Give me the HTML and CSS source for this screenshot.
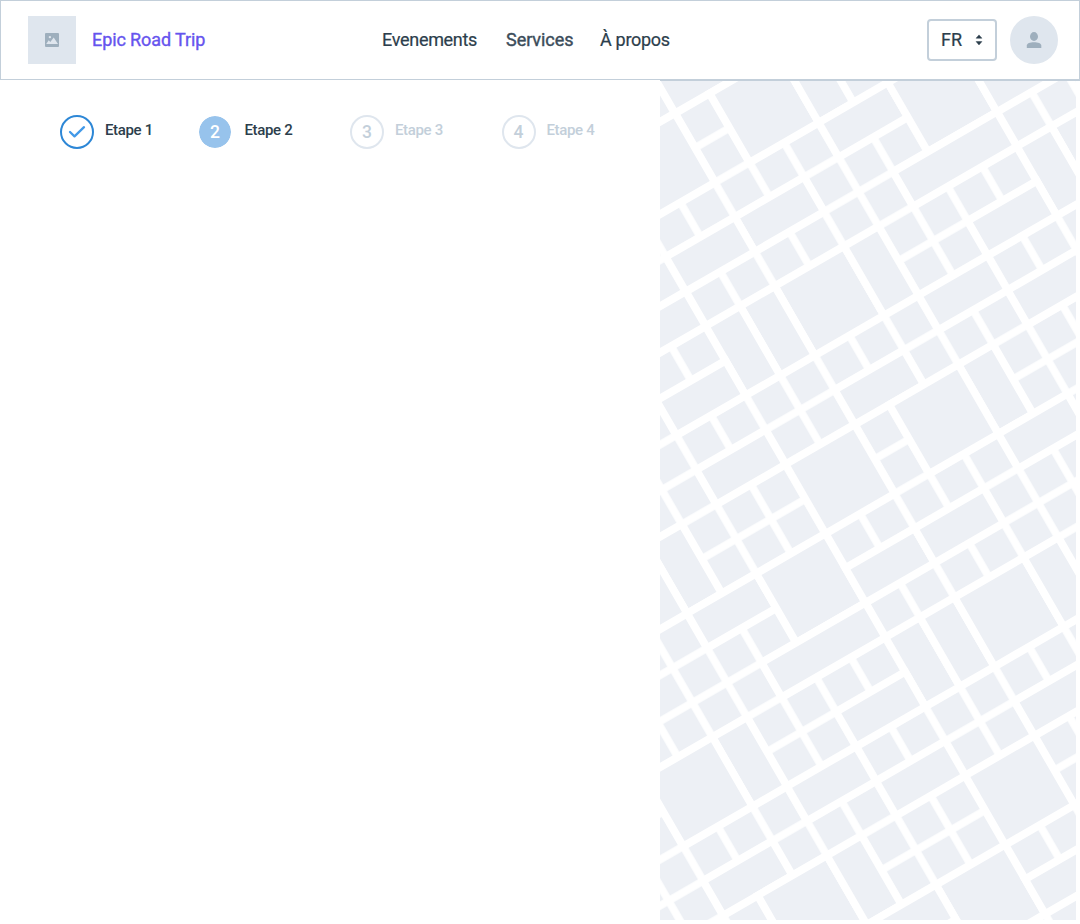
FILE: index.html
```html
<!DOCTYPE html>
<html lang="fr">
<head>
<meta charset="utf-8">
<title>Epic Road Trip</title>
<link rel="stylesheet" href="styles.css">
</head>
<body>
<header class="header">
  <div class="logo">
    <svg width="14" height="14" viewBox="0 0 14 14"><rect width="14" height="14" rx="1" fill="#9eafbd"/><circle cx="4.9" cy="4.1" r="1.2" fill="#dfe6ee"/><path d="M1.2 11 3.700 7.200 5.300 9 8.700 4.600 13 11Z" fill="#dfe6ee"/></svg>
  </div>
  <a class="brand">Epic Road Trip</a>
  <nav class="nav">
    <a class="nav-events">Evenements</a>
    <a class="nav-services">Services</a>
    <a class="nav-about">À propos</a>
  </nav>
  <div class="select"><span>FR</span>
    <svg width="8" height="12" viewBox="0 0 8 12"><path d="M1.1 4.2 4 .9 6.9 4.2ZM1.1 7.6 4 10.9 6.9 7.6Z" fill="#2c3e4c" stroke="#2c3e4c" stroke-width=".5" stroke-linejoin="round"/></svg>
  </div>
  <div class="avatar">
    <svg width="16" height="16" viewBox="0 0 16 16"><ellipse cx="8" cy="4.5" rx="4" ry="4.4" fill="#9eafbd"/><path d="M.8 16V13.6C.8 11.500 4 10.300 8 10.300S15.300 11.500 15.300 13.600V16Z" fill="#9eafbd"/></svg>
  </div>
</header>
<main class="main">
  <ol class="steps">
    <li class="step step-1"><span class="dot dot-done"><svg width="18" height="14" viewBox="0 0 18 14"><path d="M2 7 6.500 11.300 16 2.200" fill="none" stroke="#4299e8" stroke-width="2.300" stroke-linecap="round" stroke-linejoin="round"/></svg></span><span class="label">Etape 1</span></li>
    <li class="step step-2"><span class="dot dot-current">2</span><span class="label">Etape 2</span></li>
    <li class="step step-3"><span class="dot">3</span><span class="label label-muted">Etape 3</span></li>
    <li class="step step-4"><span class="dot">4</span><span class="label label-muted">Etape 4</span></li>
  </ol>
  <div class="map">
    <svg width="416" height="840" viewBox="0 0 416 840">
      <defs>
        <pattern id="block" width="1" height="1" patternUnits="userSpaceOnUse" patternTransform="translate(15 33.3) rotate(-30) scale(39.93)"><rect class="street-block" width="1" height="1"/></pattern>
      </defs>
      <rect width="416" height="840" fill="url(#block)"/>
      <g class="street-block" transform="translate(15 33.3) rotate(-30) scale(39.93)">
        <rect x="-2" y="0" width="2" height="2"/>
        <rect x="0" y="-1" width="2" height="1"/>
        <rect x="1" y="0" width="2" height="2"/>
        <rect x="3" y="0" width="1" height="2"/>
        <rect x="3" y="2" width="2" height="1"/>
        <rect x="5" y="2" width="2" height="2"/>
        <rect x="7" y="2" width="2" height="2"/>
        <rect x="8" y="5" width="2" height="2"/>
        <rect x="7" y="5" width="1" height="2"/>
        <rect x="4" y="4" width="3" height="1"/>
        <rect x="0" y="3" width="2" height="1"/>
        <rect x="-2" y="3" width="2" height="1"/>
        <rect x="-4" y="4" width="2" height="1"/>
        <rect x="0" y="5" width="2" height="2"/>
        <rect x="2" y="5" width="1" height="2"/>
        <rect x="5" y="6" width="2" height="1"/>
        <rect x="3" y="7" width="2" height="1"/>
        <rect x="-1" y="5" width="1" height="2"/>
        <rect x="-2" y="5" width="1" height="2"/>
        <rect x="-4" y="6" width="2" height="1"/>
        <rect x="-4" y="8" width="2" height="1"/>
        <rect x="0" y="8" width="2" height="1"/>
        <rect x="5" y="8" width="2" height="1"/>
        <rect x="3" y="9" width="1" height="2"/>
        <rect x="1" y="9" width="2" height="2"/>
        <rect x="-2" y="9" width="2" height="2"/>
        <rect x="-6" y="9" width="1" height="2"/>
        <rect x="-8" y="9" width="2" height="2"/>
        <rect x="-6" y="11" width="2" height="1"/>
        <rect x="-4" y="11" width="2" height="2"/>
        <rect x="-2" y="12" width="2" height="1"/>
        <rect x="0" y="12" width="2" height="1"/>
        <rect x="3" y="11" width="2" height="1"/>
        <rect x="-5" y="13" width="3" height="1"/>
        <rect x="-2" y="14" width="1" height="2"/>
        <rect x="-1" y="14" width="1" height="2"/>
        <rect x="0" y="14" width="2" height="2"/>
        <rect x="2" y="14" width="1" height="2"/>
        <rect x="-4" y="15" width="2" height="1"/>
        <rect x="-7" y="14" width="1" height="2"/>
        <rect x="-9" y="14" width="2" height="2"/>
        <rect x="-6" y="16" width="2" height="1"/>
        <rect x="-9" y="17" width="2" height="1"/>
        <rect x="-4" y="17" width="2" height="1"/>
        <rect x="0" y="17" width="2" height="1"/>
        <rect x="-8" y="18" width="2" height="2"/>
        <rect x="-6" y="18" width="1" height="2"/>
        <rect x="-2" y="18" width="2" height="2"/>
        <rect x="-4" y="20" width="2" height="2"/>
        <rect x="-6" y="20" width="2" height="1"/>
        <rect x="-2" y="21" width="2" height="1"/>
      </g>
    </svg>
  </div>
</main>
</body>
</html>
```
FILE: styles.css
```css
* { box-sizing: border-box; }
body { margin: 0; background: #fff; font-family: Roboto, "Liberation Sans", sans-serif; color: #2c3e4c; }
.header { display: flex; align-items: center; width: 1080px; height: 80px; padding: 0 21px 0 27px; border: 1px solid #c3cfda; font-size: 18px; line-height: 24px; white-space: nowrap; }
.logo { display: flex; align-items: center; justify-content: center; width: 48px; height: 48px; background: #dfe6ee; }
.brand { width: 306px; padding-left: 16px; color: #6654ee; -webkit-text-stroke: .35px; letter-spacing: -.1px; }
.nav { display: flex; flex: 1; -webkit-text-stroke: .2px; letter-spacing: -.3px; }
.nav-events { width: 124px; }
.nav-services { width: 94px; color: #3b4c5a; letter-spacing: -.05px; -webkit-text-stroke: .4px; }
.select { display: flex; align-items: center; justify-content: space-between; width: 70px; height: 42px; margin-right: 13px; padding: 0 12px; border: 2px solid #c3cfda; border-radius: 4px; -webkit-text-stroke: .2px; }
.avatar { display: flex; align-items: center; justify-content: center; width: 48px; height: 48px; border-radius: 50%; background: #dfe6ee; }
.main { display: grid; grid-template-columns: 660px 420px; }
.steps { display: flex; margin: 0; padding: 35px 0 0 60px; list-style: none; }
.step { display: flex; height: 34px; white-space: nowrap; }
.step-1 { width: 138px; }
.step-2 { width: 152px; }
.step-3 { width: 151.500px; }
.dot { display: flex; flex: none; align-items: center; justify-content: center; width: 34px; height: 34px; border: 2px solid #dfe6ee; border-radius: 50%; color: #c3cfda; font-size: 17.500px; font-weight: 500; }
.dot-done { border-color: #2d87d6; }
.dot-current { border: 1px solid #fff; background: #97c3ec; background-clip: padding-box; color: #fff; }
.label { margin-left: 11px; font-size: 15px; line-height: 30px; font-weight: 500; letter-spacing: -.35px; }
.step-2 .label { margin-left: 12.500px; }
.label-muted { color: #c3cfda; }
.map { position: relative; height: 840px; overflow: hidden; }
.map::before { content: ""; position: absolute; top: 0; left: 0; width: 420px; height: 1px; background: #c3cfda; }
.map svg { display: block; }
.street-block { fill: #edf0f5; stroke: #fff; stroke-width: .19; }
```
